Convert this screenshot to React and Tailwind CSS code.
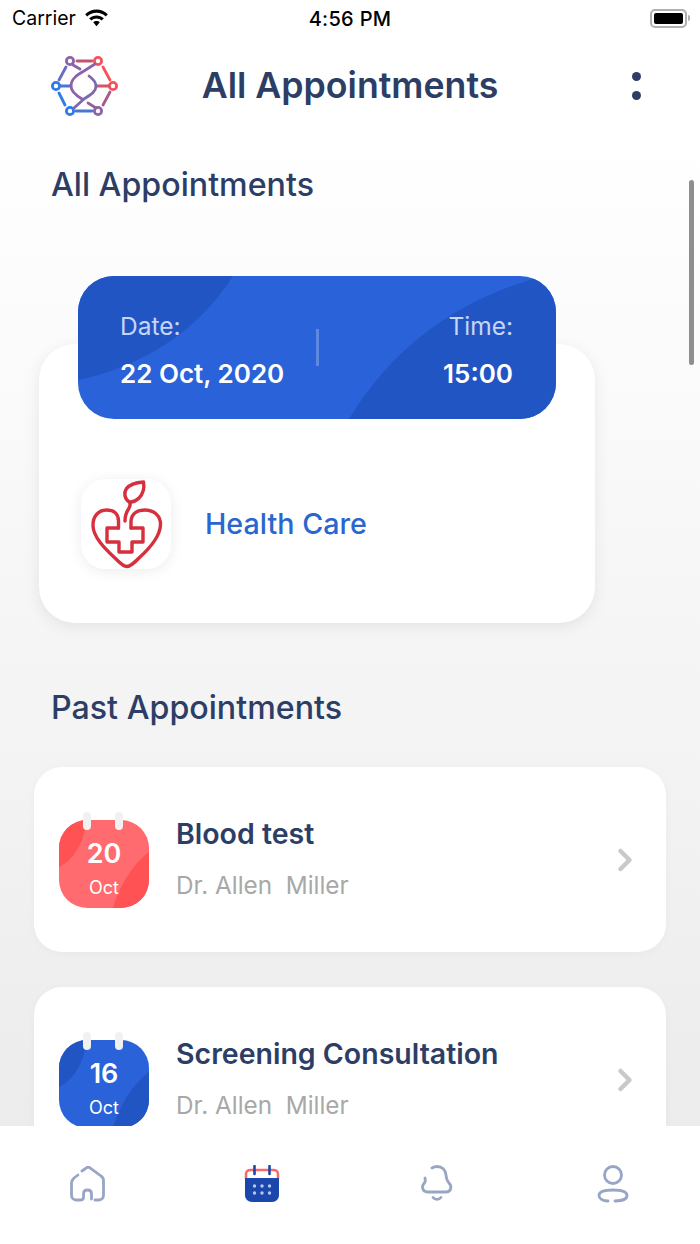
import { ChevronRight } from "lucide-react";

function Logo() {
  return (
    <svg width="68" height="60" viewBox="0 0 68 60" fill="none" strokeWidth="2.8" strokeLinecap="round">
      <circle cx="19" cy="5" r="3.6" stroke="#8a63a8" />
      <circle cx="47" cy="5" r="3.6" stroke="#f4525c" />
      <circle cx="62" cy="30" r="3.6" stroke="#f4525c" />
      <circle cx="47" cy="55" r="3.6" stroke="#8a63a8" />
      <circle cx="19" cy="55" r="3.6" stroke="#2f7be8" />
      <circle cx="5" cy="30" r="3.6" stroke="#2f7be8" />
      <path d="M26 5H41" stroke="#c0566f" />
      <path d="M52 11L59 24" stroke="#f4525c" />
      <path d="M59 36L52 49" stroke="#a85a85" />
      <path d="M25 55H41" stroke="#4a75d0" />
      <path d="M14 49L8 37" stroke="#2f7be8" />
      <path d="M8 24L15 11" stroke="#6a6cc0" />
      <path d="M9 30H20" stroke="#4a75d0" />
      <path d="M45 30H58" stroke="#d0566a" />
      <path d="M44 8L33 15C26 19 20 23 20 30C20 36 26 40 31 43" stroke="#8a63a8" />
      <path d="M23 52L33 43C39 39 45 36 45 30C45 26 42 23 38 20" stroke="#7d68b0" />
      <path d="M22 9L29 13" stroke="#8a63a8" />
      <path d="M37 47L45 52" stroke="#9a5f98" />
    </svg>
  );
}

function HeartLogo() {
  return (
    <svg width="90" height="90" viewBox="0 0 90 90" fill="none" stroke="#d62f3e" strokeWidth="3.4" strokeLinejoin="round" strokeLinecap="round">
      <path d="M37.500 49V42C37.500 34 32 31 25.700 31C17 31 11.500 38 12 47C12.500 58 23 69 35 80C39 84 42 87.500 45.700 87.500C49.500 87.500 53 84 58 79C69 69 79 58 79.500 46C80 37 73 31 64 31C56 31 50.500 35 50 42V49" />
      <path d="M37.500 49H26V63H38V73H51V63H62V49H50" />
      <path d="M44 42C44 37 45.500 33 47.500 30C49 28 49.500 26 49 23" />
      <path d="M48 23C43.500 19.500 42.500 14 45.500 9.500C49 5 56 3.500 62.500 3C63.500 9 62 15 58 19C55 22 51.500 23.500 48 23Z" />
    </svg>
  );
}

function CalendarBadge({ day, base, dark }) {
  return (
    <div className="relative w-[90px] h-[88px] shrink-0 mt-[9px]">
      <div className="absolute inset-0 rounded-[28px] overflow-hidden" style={{ background: base }}>
        <svg className="absolute inset-0" width="90" height="88" viewBox="0 0 90 88">
          <path d="M0 0H28C24 25 14 40 0 47Z" fill={dark} />
          <path d="M90 32C74 44 60 66 54 88H90Z" fill={dark} />
        </svg>
      </div>
      <span className="absolute left-[24px] -top-[8px] w-[8px] h-[18px] rounded-full bg-[#f1f1f1]" />
      <span className="absolute left-[56px] -top-[8px] w-[8px] h-[18px] rounded-full bg-[#f1f1f1]" />
      <div className="relative flex flex-col items-center pt-[16px] text-white">
        <span className="text-[27px] leading-[36px] font-semibold">{day}</span>
        <span className="text-[18px] leading-[20px] mt-[6px]">Oct</span>
      </div>
    </div>
  );
}

function PastRow({ day, title, base, dark }) {
  return (
    <div className="flex items-center h-[185px] rounded-[28px] bg-white shadow-[0_2px_10px_rgba(0,0,0,0.03)] pl-[25px] pr-[23px] shrink-0">
      <CalendarBadge day={day} base={base} dark={dark} />
      <div className="ml-[27px] flex-1 -mt-[3px]">
        <p className="text-[28.500px] leading-[34px] font-semibold text-[#2c3e66]">{title}</p>
        <p className="mt-[19px] text-[24.300px] leading-[30px] text-[#a8a8a8] whitespace-pre">Dr. Allen  Miller</p>
      </div>
      <ChevronRight size={36} strokeWidth={3} className="text-[#c9c9c9]" />
    </div>
  );
}

export default function App() {
  return (
    <div className="relative w-[700px] h-[1244px] flex flex-col overflow-hidden bg-white font-['Inter',sans-serif]">
      {/* status bar */}
      <div className="flex items-center justify-between h-[36px] pl-[12px] pr-[10px] text-black shrink-0">
        <div className="flex items-center gap-[7px] w-[200px]">
          <span className="text-[19.500px] mt-[1px]">Carrier</span>
          <svg width="27" height="20" viewBox="0 0 26 19" fill="#000">
            <path d="M13 4.5c3.4 0 6.5 1.3 8.9 3.5l2-2.1C21 3.1 17.2 1.4 13 1.4S5 3.1 2.100 5.900l2 2.100C6.500 5.800 9.600 4.500 13 4.500z" />
            <path d="M13 10c1.900 0 3.700.7 5 2l2.100-2.200C18.200 8 15.700 7 13 7s-5.200 1-7.100 2.800L8 12c1.300-1.300 3.100-2 5-2z" />
            <path d="M13 12.500c-1.200 0-2.300.5-3.200 1.200L13 17.500l3.200-3.800c-.9-.7-2-1.200-3.200-1.200z" />
          </svg>
        </div>
        <span className="text-[20px] font-medium tracking-[0.3px] mt-[1px] -ml-[2px]">4:56 PM</span>
        <div className="flex justify-end items-center w-[200px]">
          <div className="w-[37px] h-[19px] rounded-[5px] border-2 border-[#b0b0b0] p-[2px]">
            <div className="w-full h-full rounded-[2px] bg-black" />
          </div>
          <span className="w-[2px] h-[6px] ml-[1px] rounded-r bg-[#b0b0b0]" />
        </div>
      </div>

      {/* header */}
      <div className="grid grid-cols-[1fr_auto_1fr] items-center h-[100px] pl-[51px] pr-[59px] shrink-0">
        <Logo />
        <h1 className="text-[35.700px] font-semibold text-[#2c3e66] ml-[8px]">All Appointments</h1>
        <div className="flex flex-col gap-[10px] justify-self-end">
          <span className="w-[9px] h-[9px] rounded-full bg-[#2c3e66]" />
          <span className="w-[9px] h-[9px] rounded-full bg-[#2c3e66]" />
        </div>
      </div>

      {/* content */}
      <main className="flex-1 min-h-0 overflow-hidden bg-gradient-to-b from-white to-[#ececec] flex flex-col">
        <h2 className="mt-[27px] ml-[51px] text-[32.200px] leading-[44px] font-medium text-[#2c3e66]">All Appointments</h2>

        <div className="relative z-10 mt-[69px] ml-[78px] w-[478px] h-[143px] rounded-[36px] bg-[#2962d9] overflow-hidden shrink-0">
          <svg className="absolute inset-0" width="478" height="143" viewBox="0 0 478 143">
            <path d="M0 0H155C120 55 65 90 0 104Z" fill="#2255c4" />
            <path d="M271 143C315 70 380 25 455 3L478 0V143Z" fill="#2255c4" />
          </svg>
          <div className="relative flex items-center justify-between h-full pl-[42px] pr-[43px] pt-[8px]">
            <div>
              <p className="text-[24.500px] leading-[30px] text-[#c5d6f7]">Date:</p>
              <p className="mt-[15px] text-[26px] leading-[36px] font-semibold text-white">22 Oct, 2020</p>
            </div>
            <span className="absolute left-[238px] top-[53px] w-[3px] h-[37px] bg-white/25" />
            <div className="text-right">
              <p className="text-[24.500px] leading-[30px] text-[#c5d6f7]">Time:</p>
              <p className="mt-[15px] text-[26px] leading-[36px] font-semibold text-white">15:00</p>
            </div>
          </div>
        </div>

        <div className="-mt-[75px] ml-[39px] w-[556px] h-[279px] rounded-[36px] bg-white shadow-[0_4px_16px_rgba(0,0,0,0.08)] pt-[135px] pl-[42px] flex items-start gap-[34px] shrink-0">
          <div className="w-[90px] h-[90px] rounded-[24px] bg-white shadow-[0_2px_14px_rgba(0,0,0,0.08)]">
            <HeartLogo />
          </div>
          <span className="mt-[26px] text-[28.700px] leading-[38px] font-medium text-[#2a66cf]">Health Care</span>
        </div>

        <h2 className="mt-[63px] ml-[51px] text-[32.200px] leading-[44px] font-medium text-[#2c3e66]">Past Appointments</h2>

        <div className="mt-[37px] mx-[34px] flex flex-col gap-[35px]">
          <PastRow day="20" title="Blood test" base="#ff6b6e" dark="#ff5254" />
          <PastRow day="16" title="Screening Consultation" base="#2962d9" dark="#2255c4" />
        </div>
      </main>

      {/* tab bar */}
      <nav className="flex items-center justify-between h-[118px] pl-[70px] pr-[69px] pb-[2px] bg-white shrink-0 relative z-10">
        <svg width="36" height="36" viewBox="0 0 36 36" fill="none" stroke="#98a5c4" strokeWidth="2.8" strokeLinecap="round" strokeLinejoin="round">
          <path d="M12 5L16.500 1.800C17.500 1 19 1 20 1.800L31 10C32.500 11 33.500 12.500 33.500 14.500V29C33.500 32 31.500 34 29 34H25" />
          <path d="M8 9L4 12C2.500 13.500 1.500 15 1.500 17V29C1.500 32 3.500 34 6 34H11C13 34 13.500 33 13.500 31V28C13.500 25 15 24 17.500 24C20 24 21.500 25 21.500 28V33" />
        </svg>
        <svg className="-ml-[2px]" width="36" height="38" viewBox="0 0 36 38" fill="none">
          <path d="M2 14V9C2 6.500 4 5 6.500 5H29.500C32 5 34 6.500 34 9V14" stroke="#f9696b" strokeWidth="2.500" />
          <path d="M1 13H35V30C35 34 32 37 28 37H8C4 37 1 34 1 30Z" fill="#1b47ad" />
          <path d="M10.500 1V9M25.500 1V9" stroke="#1b47ad" strokeWidth="2.600" strokeLinecap="round" />
          <g fill="#b9c8ee">
            <circle cx="10.500" cy="21" r="1.700" />
            <circle cx="18" cy="21" r="1.700" />
            <circle cx="25.500" cy="21" r="1.700" />
            <circle cx="10.500" cy="28" r="1.700" />
            <circle cx="18" cy="28" r="1.700" />
            <circle cx="25.500" cy="28" r="1.700" />
          </g>
        </svg>
        <svg width="36" height="38" viewBox="0 0 36 38" fill="none" stroke="#98a5c4" strokeWidth="2.800" strokeLinecap="round" strokeLinejoin="round">
          <path d="M13 3C14.500 2 16 1.500 18 1.500C23 1.500 26.500 5 27 10C27.300 14 28 16 30 18C33 21 32.500 27 27 27H8.500C3 27 2.500 21 5 18.500C6.500 17 6.500 15 6 13" />
          <path d="M14 32.500C16 35 20 35 22 32.500" />
        </svg>
        <svg width="36" height="38" viewBox="0 0 36 38" fill="none" stroke="#98a5c4" strokeWidth="2.800" strokeLinecap="round">
          <circle cx="18" cy="10" r="8.500" />
          <path d="M13 36C7.500 36 4 33.500 4 30.500C4 27 8 25 18 25C28 25 32 27 32 30.500C32 33.500 28 36 20 36" />
        </svg>
      </nav>

      {/* scroll indicator */}
      <span className="absolute left-[689px] top-[180px] w-[5px] h-[185px] rounded-full bg-[#8e8e8e]" />
    </div>
  );
}
